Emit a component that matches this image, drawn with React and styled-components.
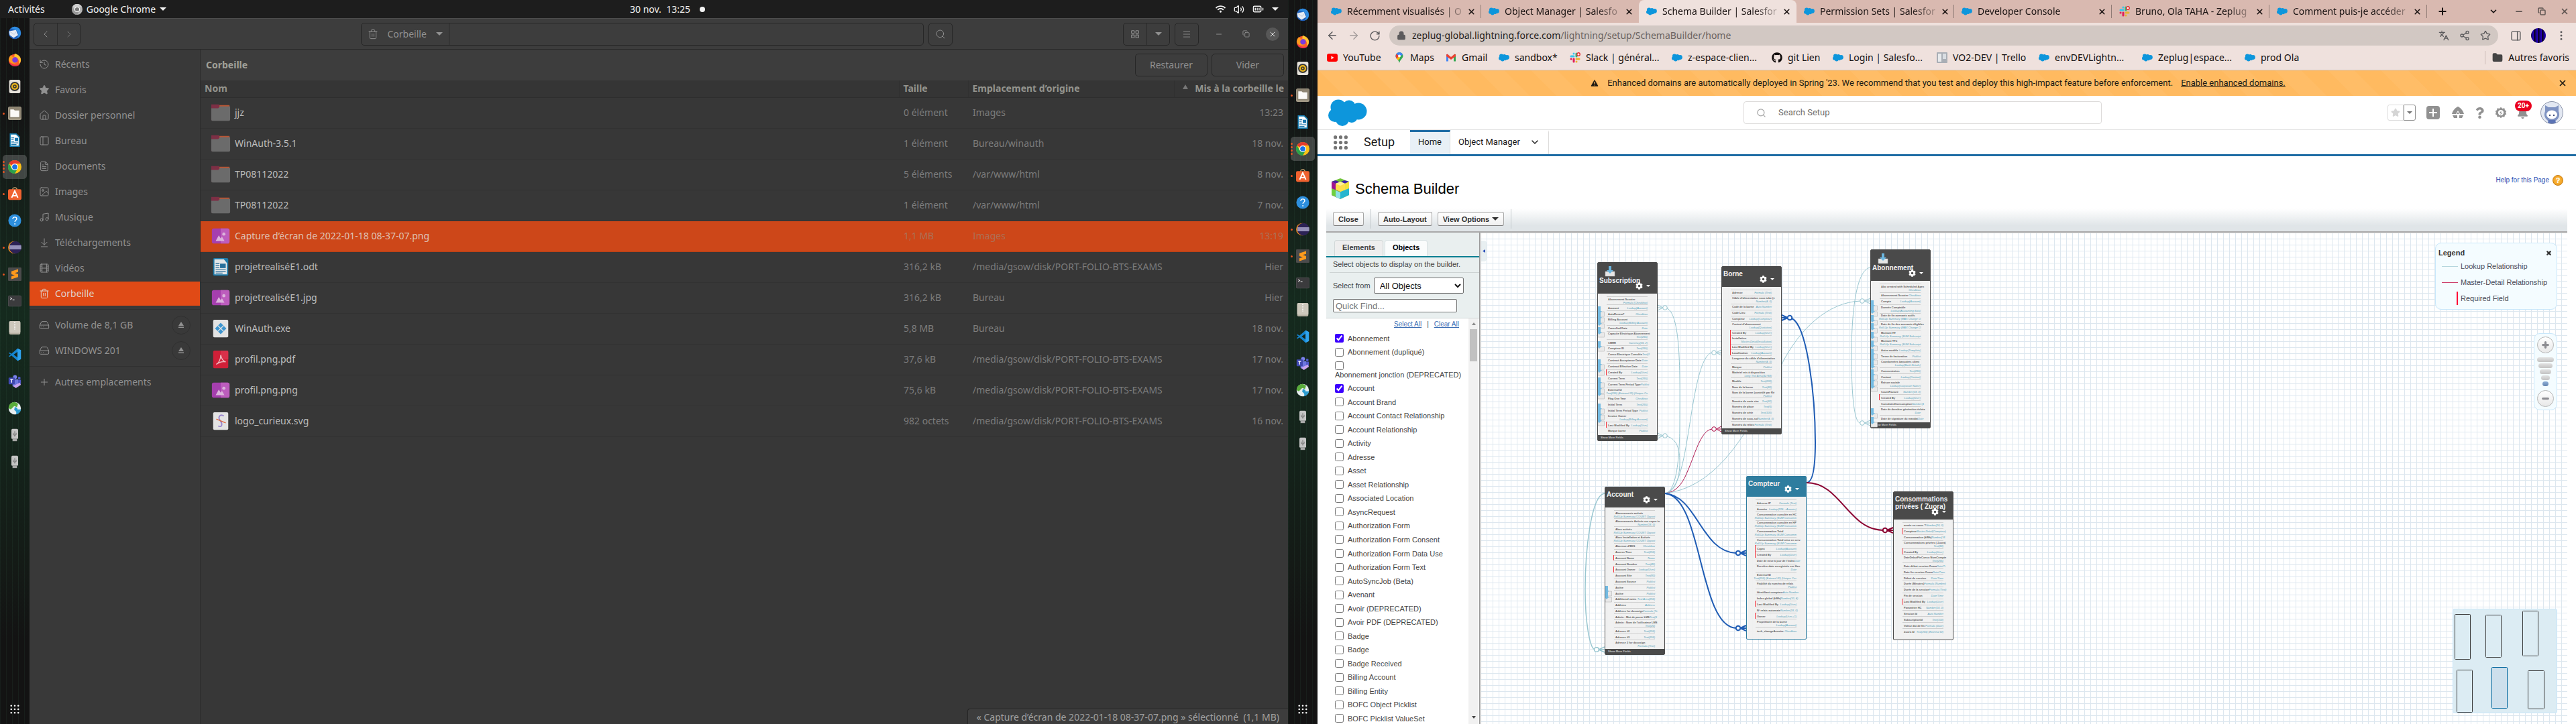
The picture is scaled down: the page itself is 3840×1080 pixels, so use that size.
import React, { useState } from "react";
import styled, { createGlobalStyle, css } from "styled-components";
import {
  History, Star, House, PanelLeft, PanelRight, FileText, Image as ImageIcon, Music, ArrowDownToLine,
  Film, Trash2, HardDrive, Plus, Search, LayoutGrid, Menu, Minus, Copy, X,
  ChevronLeft, ChevronRight, ChevronDown, ArrowLeft, ArrowRight, RotateCw, Share2, Languages,
  EllipsisVertical, TriangleAlert, Lock, Folder, Volume2, BatteryFull,
} from "lucide-react";
import { FaGithub, FaQuestion, FaCog, FaBell, FaWifi } from "react-icons/fa";

const UI = '"Noto Sans", "Open Sans", sans-serif';
const ARIAL = '"Liberation Sans", Arial, sans-serif';
const ROBOTO = 'Roboto, "Liberation Sans", sans-serif';

const Global = createGlobalStyle`
  *, *::before, *::after { box-sizing: border-box; }
  body { margin: 0; background: #141414; }
  button, input, select { font: inherit; color: inherit; margin: 0; }
  button { background: none; border: 0; padding: 0; }
  svg { display: block; flex: none; }
`;

/* ---------- desktop shell ---------- */

const Desktop = styled.div`
  display: grid;
  grid-template-columns: 1fr 1fr;
  height: 100vh;
  overflow: hidden;
  font-family: ${UI};
`;
const Monitor = styled.section`
  display: flex;
  flex-direction: column;
  min-width: 0;
  min-height: 0;
`;
const Workspace = styled.div`
  display: flex;
  flex: 1;
  min-height: 0;
`;

const TopBar = styled.header`
  display: grid;
  grid-template-columns: 1fr auto 1fr;
  align-items: center;
  height: 27px;
  padding: 0 14px 0 12px;
  background: #1d1d1d;
  color: #f2f2f2;
  font-size: 14px;
  line-height: 20px;
`;
const TopGroup = styled.div`
  display: flex;
  align-items: center;
  gap: ${(p) => p.$gap}px;
  justify-content: ${(p) => (p.$end ? "flex-end" : "flex-start")};
`;
const AppMenu = styled.button`
  display: flex;
  align-items: center;
  gap: 6px;
`;
const Clock = styled.div`
  display: flex;
  align-items: center;
  gap: 14px;
  padding-left: 72px;
`;
const Dot = styled.span`
  width: 8px;
  height: 8px;
  border-radius: 50%;
  background: #f2f2f2;
`;
const Caret = styled.span`
  width: 0;
  height: 0;
  border: ${(p) => p.$size}px solid transparent;
  border-top-color: currentColor;
  border-bottom-width: 0;
`;

const DockBar = styled.nav`
  display: flex;
  flex-direction: column;
  align-items: center;
  width: 44px;
  flex: none;
  padding: 2px 0;
  background:
    repeating-linear-gradient(90deg, rgba(60, 110, 85, 0.12) 0 1px, transparent 1px 9px),
    linear-gradient(#141414, #141515 14%, #15201a 26%, #152a1e 42%, #14241b 60%, #141a16 78%, #131313 88%);
`;
const DockSlot = styled.div`
  position: relative;
  display: grid;
  place-items: center;
  width: 44px;
  height: 40px;
`;
const DockButton = styled.button`
  display: grid;
  place-items: center;
  width: 36px;
  height: 36px;
  border-radius: 5px;
  background: ${(p) => (p.$active ? "rgba(150,150,150,.35)" : "transparent")};
`;
const RunDots = styled.span`
  position: absolute;
  left: 4px;
  top: 0;
  bottom: 0;
  display: flex;
  flex-direction: column;
  justify-content: center;
  gap: 2px;
`;
const RunDot = styled.i`
  width: 3px;
  height: 3px;
  border-radius: 50%;
  background: #e95420;
`;
const Spacer = styled.div`
  flex: 1;
`;

const Ico = ({ size = 20, children, vb = "0 0 24 24" }) => (
  <svg width={size} height={size} viewBox={vb} aria-hidden="true">{children}</svg>
);

const ChromeIcon = ({ size = 20, mono }) => (
  <Ico size={size}>
    <circle cx="12" cy="12" r="12" fill={mono ? "#b5b5b5" : "#fbc116"} />
    <path d="M12 12 1.6 6A12 12 0 0 1 22.4 6H12Z" fill={mono ? "#cfcfcf" : "#e33b2e"} />
    <path d="M1.6 6A12 12 0 0 0 12 24l5.2-9L12 12 6.8 15Z" fill={mono ? "#999" : "#2aa14b"} />
    <circle cx="12" cy="12" r="6" fill="#fff" />
    <circle cx="12" cy="12" r="4.6" fill={mono ? "#777" : "#1a73e8"} />
  </Ico>
);

const dockApps = [
  { name: "Thunderbird", dots: 0, art: <><circle cx="12" cy="12" r="11" fill="#1f5fb8" /><path d="M12 1a11 11 0 0 1 11 11c0 5-3 9-7 10 4-5 3-13-4-15L5 4a11 11 0 0 1 7-3Z" fill="#2f8be0" /><path d="M2 9 14 7l4 9-8 5-7-5Z" fill="#e8edf5" /><path d="m2 9 9 6 5-7" stroke="#b5c2d6" fill="none" /></> },
  { name: "Firefox", dots: 0, art: <><circle cx="12" cy="13" r="11" fill="#ff5a2b" /><path d="M12 1c6 2 11 6 11 12a11 11 0 0 1-4 8c2-7-1-13-8-14Z" fill="#ffc42e" /><path d="M1 12c1-4 2-6 4-8l3 3c5-1 9 1 9 6 0 4-3 6-6 6-6 0-9-3-10-7Z" fill="#ff9a1f" /><circle cx="12.5" cy="12.5" r="5" fill="#7a3be0" /><path d="M2 16a11 11 0 0 0 19 4c-6 3-14 2-19-4Z" fill="#f0304f" /></> },
  { name: "Rhythmbox", dots: 0, art: <><rect x="2" width="20" height="24" rx="3" fill="#e6e2da" /><circle cx="12" cy="12" r="8.4" fill="#3c3a37" /><circle cx="12" cy="12" r="6" fill="#f0b918" /><circle cx="12" cy="12" r="3.4" fill="#3c3a37" /><circle cx="12" cy="12" r="1.4" fill="#f0b918" /></> },
  { name: "Fichiers", dots: 1, art: <><rect width="24" height="24" rx="3" fill="#a59c89" /><rect x="1" y="1" width="22" height="20" rx="2" fill="#8d8472" /><path d="M4 5h6l2 2h8v12H4Z" fill="#fbfaf8" /></> },
  { name: "Writer", dots: 0, art: <><path d="M3 0h12l6 6v18H3Z" fill="#1880b5" /><path d="M5 2h9l5 5v15H5Z" fill="#fff" /><path d="M6 8h5M6 11h4M6 14h5M6 17h12M6 20h9" stroke="#1a76ad" strokeWidth="1.4" /><rect x="12" y="8" width="6" height="6" fill="#1a76ad" /></> },
  { name: "Google Chrome", dots: 4, active: true },
  { name: "Logiciels", dots: 1, art: <><path d="M8 5a4 4 0 0 1 8 0" stroke="#c9a36e" strokeWidth="1.6" fill="none" /><rect x="0" y="4" width="24" height="19" rx="2.5" fill="#f0622f" /><path d="m6.500 19 5.500-12 5.500 12M8 15.500h8" stroke="#fff" strokeWidth="2.4" fill="none" /></> },
  { name: "Aide", dots: 0, art: <><circle cx="12" cy="12" r="11.500" fill="#2d8fdd" /><path d="M8.500 9.500c0-5 7-4.500 7-.5 0 2.500-3.300 2.500-3.300 5.500" stroke="#fff" strokeWidth="1.7" fill="none" /><circle cx="12.200" cy="18" r="1.200" fill="#fff" /></> },
  { name: "Eclipse", dots: 1, art: <><circle cx="11" cy="12" r="11" fill="#e88a1d" /><circle cx="13" cy="12" r="11" fill="#2c2255" /><path d="M2.500 8.500h21v7h-21Z" fill="#a49fc4" /><path d="M2.500 10.800h21M2.500 13.200h21" stroke="#837db0" /></> },
  { name: "Sublime Text", dots: 1, art: <><rect width="24" height="24" rx="1.500" fill="#4b4b4b" /><path d="M18 3v5l-6 2 6 2v5L6 21v-5l6-2-6-2V7Z" fill="#ff9a1c" /></> },
  { name: "Terminal", dots: 0, art: <><rect y="2" width="24" height="20" rx="2.500" fill="#4c4c4e" /><rect x="1" y="3" width="22" height="18" rx="2" fill="#3b3b3d" /><path d="m4 6 2.500 1.800L4 9.600M8 10h3.500" stroke="#ddd" strokeWidth="1.300" fill="none" /></> },
  { name: "Archives", dots: 0, art: <><rect x="2" width="20" height="24" rx="2.500" fill="#b9b3a5" /><rect x="2" width="20" height="21" rx="2.500" fill="#cdc8bc" /><path d="M12 2v13" stroke="#fff" strokeWidth="2" strokeDasharray="1.500 1.500" /></> },
  { name: "VS Code", dots: 0, art: <><path d="M17 1 23 4v16l-6 3L6 13.500 3 16l-2-1.300L5 12 1 9.300 3 8l3 2.500Z" fill="#1585cf" /><path d="m17 7-7 5 7 5Z" fill="#14241c" /><path d="M17 1 23 4v16l-6 3Z" fill="#2fa3ee" /></> },
  { name: "Teams", dots: 0, art: <><circle cx="12.500" cy="4" r="3.500" fill="#7b83eb" /><circle cx="20" cy="6" r="2.400" fill="#5059c9" /><path d="M8 8h10v8a6 6 0 0 1-10 4Z" fill="#6d76e0" /><path d="M18 9h5v6a4 4 0 0 1-5 3Z" fill="#5059c9" /><rect x="1" y="5" width="11" height="12" rx="1" fill="#4048b0" /><path d="M4 8.500h5M6.500 8.500V14" stroke="#fff" strokeWidth="1.500" /><path d="m9 20 12-6 2 4-9 6Z" fill="#c9a4ef" /></> },
  { name: "AnyConnect", dots: 0, art: <><circle cx="12" cy="12" r="11" fill="#e8eef0" /><path d="M1 12C1 6 5 1 12 1l6 3-2 6-5-2-6 6Z" fill="#5aac3c" /><path d="M12 10c3 0 5 2 5 4h6c0 4-4 8-9 9 2-4 0-6-3-8Z" fill="#2b9bd0" /></> },
  { name: "Clé USB 1", dots: 0, art: <><rect x="6" y="1" width="12" height="18" rx="2" fill="#c4c4c4" /><rect x="8" y="19" width="8" height="4" fill="#a8a8a8" /><path d="M12 5v10M9.500 8v3l2.500 2 2.500-2V8" stroke="#7d7d7d" fill="none" strokeWidth="1.300" /></> },
  { name: "Clé USB 2", dots: 0, art: <><rect x="6" y="1" width="12" height="18" rx="2" fill="#c4c4c4" /><rect x="8" y="19" width="8" height="4" fill="#a8a8a8" /><path d="M12 5v10M9.500 8v3l2.500 2 2.500-2V8" stroke="#7d7d7d" fill="none" strokeWidth="1.300" /></> },
];

const NineDots = ({ size, color, r }) => (
  <Ico size={size}>
    {[3, 12, 21].map((y) => [3, 12, 21].map((x) => <circle key={x + "-" + y} cx={x} cy={y} r={r} fill={color} />))}
  </Ico>
);

function Dock() {
  return (
    <DockBar aria-label="Dock">
      {dockApps.map((a) => (
        <DockSlot key={a.name}>
          <RunDots>{Array.from({ length: a.dots }, (_, i) => <RunDot key={i} />)}</RunDots>
          <DockButton $active={a.active} aria-label={a.name}>
            {a.active ? <ChromeIcon /> : <Ico>{a.art}</Ico>}
          </DockButton>
        </DockSlot>
      ))}
      <Spacer />
      <DockSlot>
        <DockButton aria-label="Afficher les applications"><NineDots size={14} color="#fff" r={2.2} /></DockButton>
      </DockSlot>
    </DockBar>
  );
}

/* ---------- file manager ---------- */

const FilesWindow = styled.main`
  position: relative;
  display: flex;
  flex-direction: column;
  flex: 1;
  min-width: 0;
  background: #373737;
  color: #919191;
  font-size: 14px;
  line-height: 20px;
`;
const FilesHeader = styled.div`
  display: grid;
  grid-template-columns: 1fr 882px 1fr;
  align-items: center;
  height: 47px;
  padding: 0 13px 0 6px;
  background: #3d3d3d;
  border-top: 1px solid #4d4d4d;
  border-bottom: 1px solid #282828;
`;
const HeaderGroup = styled.div`
  display: flex;
  align-items: center;
  gap: 7px;
  justify-content: ${(p) => (p.$end ? "flex-end" : "flex-start")};
`;
const Segmented = styled.div`
  display: flex;
  height: 34px;
  border: 1px solid #262626;
  border-radius: 5px;
  ${(p) => p.$grow && css`flex: 1;`}
  & > * + * { border-left: 1px solid #2b2b2b; }
`;
const SegButton = styled.button`
  display: flex;
  align-items: center;
  justify-content: center;
  gap: 14px;
  min-width: 34px;
  padding: 0 ${(p) => p.$pad || 0}px;
`;
const PathEntry = styled.div`
  flex: 1;
`;
const WindowControls = styled.div`
  display: flex;
  align-items: center;
  gap: 20px;
  margin-left: 13px;
  button {
    display: grid;
    place-items: center;
    width: 20px;
    height: 20px;
    border-radius: 50%;
  }
  button:last-child { background: #575757; color: #e6e6e6; }
`;
const FilesBody = styled.div`
  display: flex;
  flex: 1;
  min-height: 0;
`;
const Places = styled.aside`
  width: 255px;
  flex: none;
  padding-top: 4px;
  background: #393939;
  border-right: 1px solid #2c2c2c;
`;
const PlaceGroup = styled.div`
  display: flex;
  flex-direction: column;
  gap: 2px;
  padding-bottom: 5px;
  & + & { border-top: 1px solid #303030; padding-top: 5px; }
`;
const Place = styled.a`
  display: flex;
  align-items: center;
  gap: 8px;
  height: 36px;
  padding: 0 14px;
  color: ${(p) => (p.$active ? "#e0d2cb" : "#919191")};
  background: ${(p) => (p.$active ? "#e04a16" : "transparent")};
  text-decoration: none;
`;
const Eject = styled.button`
  display: grid;
  place-items: center;
  width: 28px;
  height: 28px;
  margin-left: auto;
  border: 1px solid #303030;
  border-radius: 50%;
`;
const Listing = styled.div`
  flex: 1;
  min-width: 0;
`;
const TrashBar = styled.div`
  display: flex;
  align-items: center;
  gap: 6px;
  height: 46px;
  padding: 0 6px 0 8px;
  background: #3d3d3d;
  strong { flex: 1; color: #a0a098; }
`;
const TrashButton = styled.button`
  width: 108px;
  height: 34px;
  border: 1px solid #272727;
  border-radius: 5px;
`;
const FileTable = styled.table`
  width: 100%;
  table-layout: fixed;
  border-collapse: collapse;
  text-align: left;
  th {
    height: 25px;
    padding: 0 6px;
    background: #353535;
    border-bottom: 1px solid #2e2e2e;
    font-weight: bold;
    white-space: nowrap;
    color: #93938d;
  }
  th + th { border-left: 1px solid #303030; }
  td {
    height: 46px;
    padding: 0 7px;
    border-bottom: 1px solid #323232;
    white-space: nowrap;
    color: #7c7c7c;
  }
  th:last-child, td:last-child { text-align: right; }
`;
const SortMark = styled.span`
  display: inline-block;
  margin: 0 10px 4px 0;
  border: 4px solid transparent;
  border-top-width: 0;
  border-bottom: 7px solid #777;
`;
const FileRow = styled.tr`
  ${(p) => p.$selected && css`
    background: #cd4719;
    && td { color: #ad7057; border-color: #b84016; }
  `}
`;
const FileName = styled.div`
  display: flex;
  align-items: center;
  gap: 6px;
  padding-left: 8px;
  color: ${(p) => (p.$selected ? "#dfc3b6" : "#bdbdbd")};
`;
const StatusPill = styled.div`
  position: absolute;
  right: 0;
  bottom: 0;
  height: 23px;
  padding: 0 13px;
  border: 1px solid #262626;
  border-width: 1px 0 0 1px;
  border-radius: 4px 0 0 0;
  background: #3d3d3d;
  color: #a0a0a0;
  font-size: 14px;
  line-height: 23px;
  white-space: nowrap;
`;

const fileArt = {
  dir: <><path d="M1 3h12l3 3h14v22H1Z" fill="#7d2f45" /><path d="M14 4h16v5H14Z" fill="#b75635" /><path d="M1 9h11l3-3h16v21a2 2 0 0 1-2 2H3a2 2 0 0 1-2-2Z" fill="#6b6b6b" /></>,
  img: <><rect x="2" y="4" width="28" height="24" rx="3" fill="#a53fae" /><path d="M16 4h11a3 3 0 0 1 3 3v18a3 3 0 0 1-3 3H16Z" fill="#bd5dbd" /><path d="m8 24 5-9 3 5 2-3 4 7Z" fill="#dcb4dc" /><circle cx="21" cy="13" r="2.500" fill="#dcb4dc" /></>,
  odt: <><rect x="4" y="2" width="24" height="28" rx="2" fill="#1c7aaa" /><path d="M6 4h15l5 6v18H6Z" fill="#e2e6e8" /><path d="M8 11h6M8 14h6M8 17h6M8 20h16M8 23h16M8 26h11" stroke="#2a6d99" strokeWidth="1.300" /><rect x="15" y="11" width="9" height="7" fill="#256f9c" /></>,
  exe: <><rect x="4" y="2" width="24" height="28" rx="2" fill="#e3e3e3" /><path d="m16 7 9 9-9 9-9-9Z" fill="#3d95cf" /><path d="m11.500 11.500 9 9M20.500 11.500l-9 9" stroke="#e3e3e3" strokeWidth="1.300" /></>,
  pdf: <><rect x="4" y="2" width="24" height="28" rx="2" fill="#cf2038" /><path d="M16 2h10a2 2 0 0 1 2 2v12H16Z" fill="#d8304a" /><path d="M9 24c4-2 7-8 7-15 1 6 4 10 8 11-6-1-11 1-15 4Z" fill="none" stroke="#eeb4bb" strokeWidth="1.500" /></>,
  svg: <><rect x="4" y="2" width="24" height="28" rx="2" fill="#e3e3e3" /><path d="M21 8c-6-4-10 2-6 7s4 12-3 9" fill="none" stroke="#9a86cf" strokeWidth="2" /><path d="M9 13 24 19" stroke="#e0673f" strokeWidth="1.500" /></>,
};

const files = [
  ["dir", "jjz", "0 élément", "Images", "13:23"],
  ["dir", "WinAuth-3.5.1", "1 élément", "Bureau/winauth", "18 nov."],
  ["dir", "TP08112022", "5 éléments", "/var/www/html", "8 nov."],
  ["dir", "TP08112022", "1 élément", "/var/www/html", "7 nov."],
  ["img", "Capture d’écran de 2022-01-18 08-37-07.png", "1,1 MB", "Images", "13:19"],
  ["odt", "projetrealiséE1.odt", "316,2 kB", "/media/gsow/disk/PORT-FOLIO-BTS-EXAMS", "Hier"],
  ["img", "projetrealiséE1.jpg", "316,2 kB", "Bureau", "Hier"],
  ["exe", "WinAuth.exe", "5,8 MB", "Bureau", "18 nov."],
  ["pdf", "profil.png.pdf", "37,6 kB", "/media/gsow/disk/PORT-FOLIO-BTS-EXAMS", "17 nov."],
  ["img", "profil.png.png", "75,6 kB", "/media/gsow/disk/PORT-FOLIO-BTS-EXAMS", "17 nov."],
  ["svg", "logo_curieux.svg", "982 octets", "/media/gsow/disk/PORT-FOLIO-BTS-EXAMS", "16 nov."],
];

const places = [
  [History, "Récents"], [Star, "Favoris"], [House, "Dossier personnel"], [PanelLeft, "Bureau"],
  [FileText, "Documents"], [ImageIcon, "Images"], [Music, "Musique"], [ArrowDownToLine, "Téléchargements"],
  [Film, "Vidéos"], [Trash2, "Corbeille"],
];

function Files() {
  return (
    <FilesWindow>
      <FilesHeader>
        <HeaderGroup>
          <Segmented>
            <SegButton aria-label="Précédent"><ChevronLeft size={16} strokeWidth={1.5} /></SegButton>
            <SegButton aria-label="Suivant"><ChevronRight size={16} strokeWidth={1} /></SegButton>
          </Segmented>
        </HeaderGroup>
        <HeaderGroup>
          <Segmented $grow>
            <SegButton $pad={9}><Trash2 size={16} strokeWidth={1.5} />Corbeille <Caret $size={5} /></SegButton>
            <PathEntry />
          </Segmented>
          <Segmented><SegButton aria-label="Rechercher"><Search size={16} strokeWidth={1.5} /></SegButton></Segmented>
        </HeaderGroup>
        <HeaderGroup $end>
          <Segmented>
            <SegButton aria-label="Grille"><LayoutGrid size={14} strokeWidth={2} /></SegButton>
            <SegButton aria-label="Options d’affichage"><Caret $size={5} /></SegButton>
          </Segmented>
          <Segmented><SegButton aria-label="Menu"><Menu size={14} strokeWidth={1.5} /></SegButton></Segmented>
          <WindowControls>
            <button aria-label="Réduire"><Minus size={12} /></button>
            <button aria-label="Restaurer la fenêtre"><Copy size={11} /></button>
            <button aria-label="Fermer"><X size={12} /></button>
          </WindowControls>
        </HeaderGroup>
      </FilesHeader>
      <FilesBody>
        <Places>
          <PlaceGroup>
            {places.map(([Icon, label]) => (
              <Place key={label} href="#" $active={label === "Corbeille"}>
                <Icon size={16} strokeWidth={1.5} fill={label === "Favoris" ? "currentColor" : "none"} />{label}
              </Place>
            ))}
          </PlaceGroup>
          <PlaceGroup>
            {["Volume de 8,1 GB", "WINDOWS 201"].map((v) => (
              <Place as="div" key={v}>
                <HardDrive size={16} strokeWidth={1.5} />{v}
                <Eject aria-label={"Éjecter " + v}>
                  <Ico size={10} vb="0 0 10 10"><path d="m5 0 4 6H1ZM1 7.500h8V9H1Z" fill="currentColor" /></Ico>
                </Eject>
              </Place>
            ))}
          </PlaceGroup>
          <PlaceGroup>
            <Place href="#"><Plus size={16} strokeWidth={1.5} />Autres emplacements</Place>
          </PlaceGroup>
        </Places>
        <Listing>
          <TrashBar>
            <strong>Corbeille</strong>
            <TrashButton>Restaurer</TrashButton>
            <TrashButton>Vider</TrashButton>
          </TrashBar>
          <FileTable>
            <colgroup><col /><col width="103" /><col width="307" /><col width="170" /></colgroup>
            <thead>
              <tr><th>Nom</th><th>Taille</th><th>Emplacement d’origine</th><th><SortMark />Mis à la corbeille le</th></tr>
            </thead>
            <tbody>
              {files.map(([kind, name, size, from, when], i) => (
                <FileRow key={i} $selected={i === 4}>
                  <td><FileName $selected={i === 4}><Ico size={30} vb="0 0 32 32">{fileArt[kind]}</Ico>{name}</FileName></td>
                  <td>{size}</td><td>{from}</td><td>{when}</td>
                </FileRow>
              ))}
            </tbody>
          </FileTable>
        </Listing>
      </FilesBody>
      <StatusPill>« Capture d’écran de 2022-01-18 08-37-07.png » sélectionné&nbsp; (1,1 MB)</StatusPill>
    </FilesWindow>
  );
}

/* ---------- browser chrome ---------- */

const Browser = styled.main`
  display: flex;
  flex-direction: column;
  flex: 1;
  min-width: 0;
  background: #fff;
`;
const TabStrip = styled.div`
  display: flex;
  align-items: center;
  height: 34px;
  flex: none;
  padding: 0 8px 0 9px;
  background: #d9b9b0;
  font-size: 14px;
`;
const Tab = styled.div`
  display: flex;
  align-items: center;
  gap: 8px;
  flex: 0 1 235px;
  min-width: 0;
  height: 34px;
  padding: 0 8px 0 11px;
  color: #1b1413;
  background: ${(p) => (p.$active ? "#efe1dd" : "transparent")};
  border-radius: 8px 8px 0 0;
`;
const TabTitle = styled.span`
  flex: 1;
  white-space: nowrap;
  line-height: 20px;
  mask-image: linear-gradient(90deg, #000 80%, rgba(0, 0, 0, 0.25));
`;
const TabRule = styled.i`
  width: 1px;
  height: 20px;
  margin-left: -1px;
  background: ${(p) => (p.$hide ? "transparent" : "#8f7b75")};
`;
const TabTools = styled.div`
  display: flex;
  align-items: center;
  flex: 1;
  padding-left: 14px;
  gap: 16px;
  color: #5f5552;
  button { display: grid; place-items: center; width: 18px; height: 20px; }
  button:first-child { color: #1b1413; margin-right: auto; }
  button:nth-child(2) { color: #1b1413; margin-right: 4px; }
`;
const Toolbar = styled.div`
  display: flex;
  align-items: center;
  height: 38px;
  flex: none;
  gap: 14px;
  padding: 0 13px;
  background: #efe1dd;
  color: #5b5a5c;
`;
const UrlPill = styled.form`
  display: flex;
  align-items: center;
  flex: 1;
  gap: 9px;
  height: 30px;
  margin: 0 4px 0 -1px;
  padding: 0 11px;
  border-radius: 15px;
  background: #d2c8c3;
`;
const UrlText = styled.span`
  flex: 1;
  font-size: 14px;
  line-height: 20px;
  color: #6a6462;
  b { font-weight: 400; color: #221c1b; }
`;
const UrlActions = styled.span`
  display: flex;
  gap: 15px;
`;
const Avatar = styled.i`
  width: 22px;
  height: 22px;
  border-radius: 50%;
  background: repeating-linear-gradient(90deg, #12005e 0 2px, #2400b8 2px 4px, #0c0030 4px 6px);
`;
const Bookmarks = styled.nav`
  display: flex;
  align-items: center;
  height: 33px;
  flex: none;
  padding: 0 10px 4px 14px;
  background: #efe1dd;
  border-bottom: 1px solid #cfc5c2;
  font-size: 14px;
  line-height: 20px;
`;
const Bookmark = styled.a`
  display: flex;
  align-items: center;
  gap: 8px;
  flex: none;
  width: ${(p) => (p.$w ? p.$w + "px" : "auto")};
  color: #120d0c;
  text-decoration: none;
  white-space: nowrap;
`;
const OtherBookmarks = styled(Bookmark)`
  margin-left: auto;
  padding-left: 10px;
  border-left: 1px solid #c9bab5;
`;

const CloudArt = () => (
  <g>
    <circle cx="15" cy="12" r="11.500" /><circle cx="31" cy="11" r="9.500" /><circle cx="45" cy="18" r="12.500" />
    <circle cx="10" cy="24" r="10" /><circle cx="21" cy="30" r="10" /><circle cx="35" cy="26" r="9" />
    <rect x="10" y="12" width="32" height="18" />
  </g>
);
const Cloud = ({ w = 16, h = 12 }) => (
  <svg width={w} height={h} viewBox="0 0 58 40" fill="#0d96dc" aria-hidden="true"><CloudArt /></svg>
);
const SlackIcon = () => (
  <Ico size={16} vb="0 0 16 16">
    <g strokeWidth="3" strokeLinecap="round">
      <path d="M2 6h4M6 2v.1" stroke="#36c5f0" /><path d="M10 2v4" stroke="#2eb67d" />
      <path d="M10 10h4M10 14v-.1" stroke="#ecb22e" /><path d="M6 10v4M2 10h.1" stroke="#e01e5a" />
    </g>
    <circle cx="13" cy="3" r="2.200" fill="#fff" stroke="#e8272c" strokeWidth="1.400" />
  </Ico>
);
const YouTubeIcon = () => (
  <Ico size={16} vb="0 0 16 16"><rect y="2" width="16" height="12" rx="3" fill="#f00" /><path d="m6.500 5.500 4 2.500-4 2.500Z" fill="#fff" /></Ico>
);
const MapsIcon = () => (
  <Ico size={16} vb="0 0 16 16">
    <path d="M8 0a5.500 5.500 0 0 1 5.500 5.500C13.500 9 9 11 8 16 7 11 2.500 9 2.500 5.500A5.500 5.500 0 0 1 8 0Z" fill="#34a853" />
    <path d="M8 0a5.500 5.500 0 0 1 5 3.500L4 9C3 8 2.500 7 2.500 5.500A5.500 5.500 0 0 1 8 0Z" fill="#4285f4" />
    <path d="M3.500 2.500 8 5.500 4 10C3 8.500 2.500 7 2.500 5.500Z" fill="#ea4335" /><path d="m4 9 4-3 1 3-3 3Z" fill="#fbbc04" /><circle cx="8" cy="5.500" r="2" fill="#fff" />
  </Ico>
);
const GmailIcon = () => (
  <Ico size={16} vb="0 0 16 16">
    <path d="M1 13.500V3h3v10.500Z" fill="#4285f4" /><path d="M12 13.500V3h3v10.500Z" fill="#34a853" />
    <path d="M1 3.500 2.500 2.500 8 7l5.500-4.500L15 3.500V6L8 11 1 6Z" fill="#ea4335" />
  </Ico>
);
const TrelloIcon = () => (
  <Ico size={16} vb="0 0 16 16"><rect width="16" height="16" rx="1" fill="#a9aeb5" /><rect x="2" y="2" width="5" height="12" fill="#e8eaec" /><rect x="9" y="2" width="5" height="8" fill="#d9dde2" /></Ico>
);

const tabs = [
  ["sf", "Récemment visualisés | O"], ["sf", "Object Manager | Salesfo"], ["sf", "Schema Builder | Salesfor"],
  ["sf", "Permission Sets | Salesfor"], ["sf", "Developer Console"], ["slack", "Bruno, Ola TAHA - Zeplug"],
  ["sf", "Comment puis-je accéder"],
];
const bookmarks = [
  [YouTubeIcon, "YouTube", 100], [MapsIcon, "Maps", 77], [GmailIcon, "Gmail", 79], [Cloud, "sandbox*", 106],
  [SlackIcon, "Slack | général...", 152], [Cloud, "z-espace-clien...", 149], [FaGithub, "git Lien", 91],
  [Cloud, "Login | Salesfo...", 155], [TrelloIcon, "VO2-DEV | Trello", 152], [Cloud, "envDEVLightn...", 154],
  [Cloud, "Zeplug|espace...", 153], [Cloud, "prod Ola", 80],
];

/* ---------- Salesforce setup ---------- */

const Banner = styled.div`
  display: flex;
  align-items: center;
  height: 38px;
  flex: none;
  padding-right: 13px;
  background: repeating-linear-gradient(45deg, #ffba60 0 28px, #ffbd67 28px 56px);
  font: 13px/18px ${ROBOTO};
  color: #201b14;
  a { color: inherit; }
`;
const BannerText = styled.div`
  display: flex;
  align-items: center;
  justify-content: center;
  flex: 1;
  gap: 12px;
`;
const SetupHeader = styled.header`
  display: grid;
  grid-template-columns: 9fr 534px 10fr;
  align-items: center;
  height: 51px;
  flex: none;
  padding: 0 19px 0 16px;
  border-bottom: 1px solid #e1e1e1;
`;
const SearchBox = styled.label`
  display: flex;
  align-items: center;
  gap: 16px;
  height: 34px;
  padding: 0 18px;
  border: 1px solid #dddbda;
  border-radius: 4px;
  color: #a5a5a5;
  input {
    flex: 1;
    border: 0;
    outline: 0;
    font: 13px/18px ${ROBOTO};
    &::placeholder { color: #706e6b; opacity: 1; }
  }
`;
const SetupTools = styled.div`
  display: flex;
  align-items: center;
  justify-content: flex-end;
  gap: 14px;
  color: #919191;
`;
const FavGroup = styled.div`
  display: flex;
  height: 24px;
  margin-right: 2px;
  button { display: grid; place-items: center; width: 24px; border: 1px solid #dcdcdc; border-radius: 3px 0 0 3px; color: #d5d5d5; }
  button + button { width: 18px; border-color: #919191; border-radius: 0 3px 3px 0; color: #777; }
`;
const ToolButton = styled.button`
  position: relative;
  display: grid;
  place-items: center;
  width: 18px;
  height: 24px;
  margin-right: ${(p) => p.$after || 0}px;
`;
const Badge = styled.span`
  position: absolute;
  left: -2px;
  top: -6px;
  padding: 0 4px;
  border-radius: 8px;
  background: #ea001e;
  color: #fff;
  font: bold 10px/16px ${ROBOTO};
`;
const SetupNav = styled.nav`
  display: flex;
  height: 39px;
  flex: none;
  padding-left: 24px;
  border-bottom: 3px solid #1f6da5;
  font: 13px/20px ${ROBOTO};
  color: #181818;
`;
const NavTitle = styled.span`
  display: flex;
  align-items: center;
  gap: 24px;
  width: 114px;
  font-size: 18px;
`;
const NavTab = styled.a`
  display: flex;
  align-items: center;
  gap: 14px;
  padding: 0 12px 3px;
  color: inherit;
  text-decoration: none;
  background: ${(p) => (p.$active ? "#e8f0f6" : "transparent")};
  border-top: 3px solid ${(p) => (p.$active ? "#1f6da5" : "transparent")};
  border-right: 1px solid #dddbda;
`;
const PageTitle = styled.div`
  display: flex;
  align-items: center;
  gap: 8px;
  height: 78px;
  flex: none;
  padding: 18px 19px 0 20px;
  font-family: ${ARIAL};
  h1 { flex: 1; margin: 0; padding-top: 2px; font-size: 22px; line-height: 28px; font-weight: 400; color: #000; }
`;
const HelpLink = styled.a`
  display: flex;
  align-items: center;
  gap: 5px;
  padding-bottom: 24px;
  font-size: 10px;
  line-height: 16px;
  color: #2a4bb0;
  text-decoration: none;
`;
const HelpBall = styled.i`
  width: 16px;
  height: 16px;
  border-radius: 50%;
  border: 1px solid #c77c10;
  background: radial-gradient(#ffc24d, #ea920f);
  color: #fff;
  font: bold 11px/14px ${ARIAL};
  text-align: center;
`;
const BuilderBar = styled.div`
  display: flex;
  align-items: center;
  height: 36px;
  flex: none;
  margin: 0 13px;
  padding: 0 0 3px 10px;
  background: linear-gradient(#fff, #e0e5e8 75%);
  border-bottom: 2px solid #a9a9a9;
  font: bold 11px/16px ${ARIAL};
  color: #333;
`;
const BuilderButton = styled.button`
  display: flex;
  align-items: center;
  gap: 4px;
  height: 21px;
  padding: 0 7px;
  border: 1px solid #a5a5a5;
  border-bottom-color: #7f7f7f;
  border-radius: 3px;
  background: linear-gradient(#fff, #f0f0f0);
  & + & { margin-left: 8px; }
`;
const BarRule = styled.i`
  width: 1px;
  height: 29px;
  margin: 0 10px;
  background: #c3c9cc;
`;
const Builder = styled.div`
  display: flex;
  flex: 1;
  min-height: 0;
  margin: 0 13px;
`;
const Panel = styled.aside`
  display: flex;
  flex-direction: column;
  width: 231px;
  flex: none;
  overflow: hidden;
  background: #fff;
  border-right: 3px double #9b9b9b;
  font: 11px/14px ${ARIAL};
  color: #444;
`;
const PanelHead = styled.div`
  background: #e9efef;
`;
const PanelTabs = styled.div`
  display: flex;
  gap: 2px;
  padding: 11px 12px 0;
  border-bottom: 2px solid #0b7f92;
`;
const PanelTab = styled.button`
  height: 24px;
  padding: 0 11px 4px;
  border-radius: 4px 4px 0 0;
  border: 1px solid ${(p) => (p.$active ? "#d9e2e4" : "#d2d8d8")};
  border-bottom: 0;
  background: ${(p) => (p.$active ? "#fafcfc" : "#eeeeee")};
  color: ${(p) => (p.$active ? "#000" : "#444")};
  font-weight: bold;
`;
const PanelHint = styled.p`
  margin: 0 0 0 5px;
  padding: 3px 0 5px 5px;
  border-bottom: 1px solid #cdd3d3;
`;
const PanelForm = styled.div`
  padding: 7px 20px 8px 10px;
  border-bottom: 1px solid #cdd3d3;
`;
const SelectRow = styled.label`
  display: flex;
  align-items: center;
  gap: 5px;
  margin-bottom: 8px;
  select {
    width: 134px;
    height: 24px;
    padding: 0 4px;
    border: 1px solid #6f6f6f;
    border-radius: 2px;
    background: #fff;
    color: #111;
    font-size: 13px;
  }
`;
const QuickFind = styled.input`
  display: block;
  width: 185px;
  height: 20px;
  padding: 0 3px;
  border: 1px solid #6f6f6f;
  border-radius: 2px;
  background: #fff;
  &&& { font-size: 13px; }
  &::placeholder { color: #757575; opacity: 1; }
`;
const PanelScroll = styled.div`
  display: flex;
  flex: 1;
  min-height: 0;
`;
const ObjectList = styled.div`
  display: flex;
  flex-direction: column;
  justify-content: space-between;
  flex: 1;
  min-width: 0;
  margin-bottom: -2px;
`;
const SelectLinks = styled.div`
  display: flex;
  justify-content: flex-end;
  gap: 8px;
  padding: 2px 14px 3px 0;
  font-size: 10px;
  a { color: #3c6eb4; }
`;
const ObjectItem = styled.label`
  display: flex;
  flex-wrap: wrap;
  align-items: center;
  column-gap: 6px;
  padding: 3px 0 3px 13px;
  white-space: nowrap;
  input { width: 13px; height: 13px; accent-color: #3b00ff; }
`;
const QuickCheck = styled.input.attrs({ type: "checkbox" })`
  flex: none;
`;
const ScrollTrack = styled.div`
  display: flex;
  flex-direction: column;
  align-items: center;
  justify-content: space-between;
  width: 15px;
  margin-right: 1px;
  padding: 4px 0 6px;
  background: #f1f1f1;
`;
const ScrollThumb = styled.i`
  width: 11px;
  height: 48px;
  margin: 4px 0 auto;
  background: #c1c1c1;
`;

/* ---------- schema canvas ---------- */

const Canvas = styled.div`
  position: relative;
  flex: 1;
  min-width: 0;
  overflow: hidden;
  border-top: 1px solid #e4e4e4;
  background:
    linear-gradient(90deg, transparent 8px, #dde7ef 8px) 0 0 / 9px 9px,
    linear-gradient(transparent 8px, #dde7ef 8px) 0 0 / 9px 9px;
  font-family: ${ARIAL};
`;
const Links = styled.svg`
  position: absolute;
  inset: 0;
  width: 100%;
  height: 100%;
`;
const Handle = styled.button`
  position: absolute;
  left: 0;
  top: 11px;
  display: grid;
  place-items: center;
  width: 8px;
  height: 31px;
  border-radius: 0 4px 4px 0;
  background: #e8eff1;
`;
const Node = styled.article`
  position: absolute;
  left: ${(p) => p.$x}px;
  top: ${(p) => p.$y}px;
  display: flex;
  flex-direction: column;
  width: 90px;
  height: ${(p) => p.$h}px;
  border: 1px solid ${(p) => p.$tone};
  border-radius: 2px;
  background: rgba(240, 240, 240, 0.94);
`;
const NodeHead = styled.header`
  position: relative;
  flex: none;
  padding: 5px 2px 14px;
  background: ${(p) => p.$tone};
  color: #f2f2f2;
  font: bold 10px/11px ${ARIAL};
  span { display: block; }
  & > svg { margin: 0 0 0 5px; }
`;
const NodeGear = styled.button`
  position: absolute;
  right: 10px;
  bottom: 6px;
  display: flex;
  align-items: center;
  gap: 5px;
  color: #fff;
`;
const FieldList = styled.ul`
  display: flex;
  flex-direction: column;
  flex: 1;
  margin: 0;
  padding: 4px 14px ${(p) => (p.$open ? 8 : 2)}px 13px;
  list-style: none;
`;
const Field = styled.li`
  position: relative;
  display: flex;
  flex-direction: ${(p) => (p.$wide ? "column" : "row")};
  align-items: ${(p) => (p.$wide ? "stretch" : "center")};
  justify-content: ${(p) => (p.$wide ? "center" : "space-between")};
  flex: ${(p) => (p.$wide ? 13 : 9)} 1 0;
  min-height: 0;
  padding-left: 2px;
  border-top: 1px solid #cfcfcf;
  box-shadow: ${(p) => (p.$req ? "-1px 0 0 #f5333f" : "none")};
  font-size: 4px;
  line-height: 5px;
  white-space: nowrap;
  b { color: #5c5c5c; }
  em { align-self: ${(p) => (p.$wide ? "flex-end" : "auto")}; color: #4f9db8; }
`;
const Package = styled.svg`
  position: absolute;
  left: -13px;
  top: 2px;
  z-index: 1;
`;
const MoreFields = styled.button`
  flex: none;
  height: 8px;
  padding: 0 4px;
  background: #4a4a4a;
  color: #c9c9c9;
  font: bold 4px/8px ${ARIAL};
  text-align: left;
`;
const Legend = styled.section`
  position: absolute;
  right: 15px;
  top: 14px;
  width: 182px;
  padding: 6px 4px 4px;
  border: 1px solid #c8e7fb;
  border-radius: 9px;
  background: #f4fcff;
  font-size: 11px;
  line-height: 16px;
  color: #4a4a56;
`;
const LegendTitle = styled.header`
  display: flex;
  justify-content: space-between;
  align-items: center;
  padding-right: 3px;
  font-weight: bold;
  color: #333;
`;
const LegendRow = styled.div`
  display: flex;
  align-items: center;
  gap: 4px;
  height: 24px;
  padding-left: 5px;
`;
const LineKey = styled.i`
  width: 24px;
  height: 1px;
  background: ${(p) => p.$color};
`;
const BarKey = styled.i`
  width: 2px;
  height: 20px;
  margin-left: 22px;
  background: #ff0036;
`;
const ZoomBox = styled.div`
  position: absolute;
  right: 15px;
  top: 149px;
  display: flex;
  flex-direction: column;
  align-items: center;
  gap: 6px;
  width: 35px;
  padding: 4px 0;
  border: 1px solid #c8e7fb;
  border-radius: 9px;
  background: #f4fcff;
`;
const ZoomButton = styled.button`
  display: grid;
  place-items: center;
  width: 25px;
  height: 25px;
  border: 1px solid #b5b5b5;
  border-radius: 50%;
  background: linear-gradient(#fff, #e8e8e8);
  color: #8d8d92;
`;
const ZoomLevels = styled.div`
  display: flex;
  flex-direction: column;
  align-items: center;
  gap: 2px;
`;
const ZoomLevel = styled.button`
  width: ${(p) => p.$w}px;
  height: 7px;
  border-radius: 4px;
  background: ${(p) => (p.$on ? "linear-gradient(#8fb0d8,#6384b0)" : "linear-gradient(#e2e2e2,#c3c3c3)")};
`;
const MiniMap = styled.svg`
  position: absolute;
  right: 15px;
  bottom: 16px;
  border: 1px solid #c6e6fb;
  border-radius: 3px;
  background: #dcecf3;
`;

const ORIGIN = { x: 2208, y: 348 };
const DARK = "#4a4a4a";
const BLUE = "#2f7d9f";

/* Field flags: w = two lines, r = required, p = comes from a package */
const nodes = [
  {
    title: "Subscription", x: 2381, y: 391, h: 267, tone: DARK, icon: true, more: true,
    fields: [
      ["Abonnement Scooter", "Formula (Checkbox)", "w"], ["Account", "Lookup(Account)", "p"], ["AutoRenew?", "Checkbox", "p"],
      ["Billing Account", "Lookup(Billing Account)", "wp"], ["Cancelled Date", "Date", "p"], ["Capacite Electrique Abonnement", "Text(255)", "w"],
      ["CMRR", "Currency(16, 2)", "p"], ["Compteur ID", "Text(255)", ""], ["Conso Electrique Cumulée", "Text(2", ""],
      ["Contract Acceptance Date", "Date", "p"], ["Contract Effective Date", "Date", "p"], ["Created By", "Lookup(User)", "r"],
      ["Current Term", "Text(255)", "p"], ["Current Term Period Type", "Picklist", "p"], ["External Id", "Text(255) (External ID) (Unique Ca", "wp"],
      ["Flag One Year", "Checkbox", ""], ["Initial Term", "Text(255)", "p"], ["Initial Term Period Type", "Picklist", "p"],
      ["Invoice Owner", "Lookup(Billing Account)", "wp"], ["Last Modified By", "Lookup(User)", "r"], ["Marque borne", "Picklist", ""],
    ],
  },
  {
    title: "Borne", x: 2566, y: 397, h: 251, tone: DARK, more: true,
    fields: [
      ["Adresse", "Formula (Text)", ""], ["Câble d'alimentation sous tube (e", "Number(4, 0)", "w"], ["Code de la borne", "Auto Number", ""],
      ["Code Lieu", "Formula (Text)", ""], ["Compteur", "Lookup(Compteur)", ""], ["Contrat d'abonnement", "Lookup(Quotation)", "w"],
      ["Created By", "Lookup(User)", "r"], ["Installation", "Master-Detail(Installation)", "wr"], ["Last Modified By", "Lookup(User)", "r"],
      ["Localisation", "Lookup(Account)", "r"], ["Longueur du câble d'alimentation", "Number(4, 0)", "w"], ["Marque", "Picklist", ""],
      ["Matériel mis à disposition", "Long Text Area(32768)", "w"], ["Modèle", "Text(200)", ""], ["Nom de la borne", "Text(80)", ""],
      ["Nom de la borne (contrôlé par Ré", "Picklist", "w"], ["Numéro de carte sim", "Text(32)", ""], ["Numéro de place", "Text(6)", ""],
      ["Numéro de série", "Text(100)", ""], ["Numéro de sous-sol", "Number(4, 0)", ""], ["Numéro du relais", "Formula (Text)", ""],
    ],
  },
  {
    title: "Abonnement", x: 2788, y: 372, h: 267, tone: DARK, icon: true, more: true,
    fields: [
      ["Abo created with Scheduled Apex", "Checkbox", "w"], ["Abonnement Scooter", "Checkbox", ""], ["Compte", "Lookup(Account)", "p"],
      ["Donnée Comptable", "Lookup(Accounting data)", "wp"], ["Date de fin avenants actifs", "Roll-Up Summary (MAX Change O", "wp"],
      ["Date de fin des avenants éligibles", "Roll-Up Summary (MAX Change O", "wp"], ["Montant HT", "Roll-Up Summary (SUM Subscript", "wp"],
      ["Montant TTC", "Roll-Up Summary (SUM Subscript", "wp"], ["Autre modèle", "Lookup(Template)", "p"], ["Terme de facturation", "Picklist", "p"],
      ["Coordonnées bancaires client", "Lookup(Bank Details)", "wp"], ["Commentaires", "Text(255)", "p"], ["Contact", "Lookup(Contact)", "p"],
      ["Raison sociale", "Lookup(Corporate Name)", "wp"], ["CountFacture", "Number(18, 0)", ""], ["Created By", "Lookup(User)", "r"],
      ["CumulatedConsumption", "Number(1", ""], ["Date de dernière génération échéa", "Date", "wp"], ["Date de signature du mandat", "Date", "p"],
    ],
  },
  {
    title: "Account", x: 2392, y: 726, h: 251, tone: DARK, more: true,
    fields: [
      ["Abonnements activés", "Roll-Up Summary (COUNT Opport", "w"], ["Abonnements Activés sur copro in", "Number(18, 0)", "w"],
      ["Abos activés", "Roll-Up Summary (COUNT Opport", "w"], ["Abos Installation et Activés", "Roll-Up Summary (COUNT Opport", "w"],
      ["Absence d'EDS", "Checkbox", ""], ["Access Time", "Text(255)", ""], ["Account Name", "Name", "r"], ["Account Number", "Text(40)", ""],
      ["Account Owner", "Lookup(User)", "r"], ["Account Site", "Text(80)", ""], ["Account Source", "Picklist", ""], ["Active", "Picklist", "p"],
      ["Active", "Picklist", "p"], ["Additional notes", "Text Area(255)", ""], ["Address", "Address", ""], ["Address for docusign", "Formula (Te", ""],
      ["Admin : Mot de passe LMS", "Text(6", ""], ["Admin : Nom de l'utilisateur LMS", "Text(20)", "w"], ["Adresse #2", "Text(255)", ""],
      ["Adresse #3", "Text(255)", ""], ["Adresse 2 for docusign", "Formula (Text)", "w"],
    ],
  },
  {
    title: "Compteur", x: 2603, y: 710, h: 244, tone: BLUE,
    fields: [
      ["Adresse IP", "Formula (Text)", ""], ["Armoire", "Lookup(PDL - Armoire)", ""], ["Consommation cumulée en HC", "Roll-Up Summary (SUM Consomm", "w"],
      ["Consommation cumulée en HP", "Roll-Up Summary (SUM Consomm", "w"], ["Consommation Total", "Roll-Up Summary (SUM Consomm", "w"],
      ["Consommation Total mise en serv", "Roll-Up Summary (SUM Consomm", "w"], ["Copro", "Lookup(Account)", "r"], ["Created By", "Lookup(User)", "r"],
      ["Date de mise à jour de l'index", "Date", ""], ["Dernière date enregistrée sur Hen", "Date", "w"], ["External ID", "Text(255) (External ID) (Unique Cas", "w"],
      ["Fiabilité du numéro de relais", "Picklist", "w"], ["Identifiant compteur", "Auto Number", ""], ["Index global (kWh)", "Number(10, 4)", ""],
      ["Last Modified By", "Lookup(User)", "r"], ["N° relais automate", "Number(18, 0)", ""], ["Owner", "Lookup(User,+1)", "r"],
      ["Propriétaire de la borne", "Lookup(Account)", "w"], ["tech_changeArmoire", "Checkbox", ""],
    ],
  },
  {
    title: "Consommations privées ( Zuora)", x: 2822, y: 733, h: 222, tone: DARK,
    fields: [
      ["année en cours ?", "Number(18, 0)", ""], ["Compteur", "Master-Detail(Compteur)", "r"], ["Consommation (kWh)", "Number(16", ""],
      ["Consommations privées ( Zuora)", "Text(80)", "w"], ["Created By", "Lookup(User)", "r"], ["DateDebutFinConso NumCompte", "Text(255)", "w"],
      ["Date début session Zuora", "Date/Ti", ""], ["Date fin session Zuora", "Date/Time", ""], ["Début de session", "Date/Time", ""],
      ["Durée (Minutes)", "Formula (Number)", ""], ["Durée de la session", "Formula (Text)", ""], ["Fin de session", "Date/Time", ""],
      ["Last Modified By", "Lookup(User)", "r"], ["Paramètre HC", "Number(18, 0)", ""], ["Session Id", "Auto Number", ""],
      ["SubscriptionId", "Text(100)", ""], ["Valeur dat de fin", "Formula (Date)", ""], ["Zuora Id", "Text(255) (External ID)", ""],
    ],
  },
];

const LOOKUP = "#98c6d0";
const ACTIVE = "#1f5cb4";
const links = [
  { c: LOOKUP, w: 1, end: [2482, 459, 2471], d: "M2485 460C2507 470 2504 570 2504 630C2504 690 2498 734 2482 736" },
  { c: LOOKUP, w: 1, end: [2482, 650, 2471], d: "M2485 651C2500 655 2504 670 2504 690C2504 715 2496 734 2482 736" },
  { c: LOOKUP, w: 1, end: [2555, 526, 2566], d: "M2552 526C2532 530 2523 610 2516 650C2508 700 2500 732 2482 736" },
  { c: "#b01850", w: 1, end: [2555, 640, 2566], d: "M2552 640C2535 642 2526 680 2516 702C2507 725 2497 734 2482 736" },
  { c: LOOKUP, w: 1, end: [2776, 449, 2788], d: "M2773 449C2725 451 2683 490 2656 543C2615 625 2570 725 2482 736" },
  { c: LOOKUP, w: 1, end: [2776, 631, 2788], d: "M2788 399C2768 402 2760 460 2760 530C2760 590 2764 630 2773 631" },
  { c: LOOKUP, w: 1.5, end: [2380, 969, 2392], d: "M2392 736C2372 738 2363 820 2363 880C2363 930 2370 966 2377 969" },
  { c: ACTIVE, w: 2, end: [2668, 474, 2656], d: "M2671 475C2694 486 2706 590 2706 660C2706 700 2702 720 2693 720" },
  { c: ACTIVE, w: 2, end: [2591, 825, 2603], d: "M2482 736C2530 740 2536 823 2588 825" },
  { c: ACTIVE, w: 2, end: [2591, 937, 2603], d: "M2482 736C2538 740 2532 935 2588 937" },
  { c: "#8a0030", w: 2, end: [2810, 791, 2822], d: "M2693 720C2744 720 2755 790 2807 791" },
];

function Link({ c, w, d, end: [cx, cy, nx] }) {
  const s = nx > cx ? 3 : -3;
  return (
    <g fill="none" stroke={c} strokeWidth={w}>
      <path d={d} />
      <path d={`M${cx + s} ${cy}H${nx}M${cx + s} ${cy}L${nx} ${cy - 4}M${cx + s} ${cy}L${nx} ${cy + 4}`} />
      <circle cx={cx} cy={cy} r="3.3" fill="#fff" />
    </g>
  );
}

const PackageArt = () => (
  <>
    <path d="M1 8h14v7H1Z" fill="#e6e6e6" stroke="#b5b5b5" strokeWidth=".5" />
    <path d="M6 0h4v6h3l-5 5-5-5h3Z" fill="#6bb6e0" />
  </>
);

function SchemaNode({ n }) {
  return (
    <Node $x={n.x - ORIGIN.x} $y={n.y - ORIGIN.y} $h={n.h} $tone={n.tone}>
      <NodeHead $tone={n.tone}>
        {n.icon && <svg width="22" height="16" viewBox="0 0 16 16"><PackageArt /></svg>}
        <span>{n.title}</span>
        <NodeGear aria-label={"Options " + n.title}><FaCog size={11} /><Caret $size={3} /></NodeGear>
      </NodeHead>
      <FieldList $open={!n.more}>
        {n.fields.map(([label, type, f], i) => (
          <Field key={i} $wide={f.includes("w")} $req={f.includes("r")}>
            {f.includes("p") && (
              <Package width="10" height="16" viewBox="0 0 10 16" aria-hidden="true">
                <path d="M0 8h9.500v7H0Z" fill="#e9e9e9" stroke="#b5b5b5" strokeWidth=".6" />
                <path d="M0 0h4v7h2L2 11 0 9Z" fill="#74bbe2" />
              </Package>
            )}
            <b>{label}</b><em>{type}</em>
          </Field>
        ))}
      </FieldList>
      {n.more && <MoreFields>Show More Fields</MoreFields>}
    </Node>
  );
}

const objects = [
  "Abonnement", "Abonnement (dupliqué)", "Abonnement jonction (DEPRECATED)", "Account", "Account Brand",
  "Account Contact Relationship", "Account Relationship", "Activity", "Adresse", "Asset", "Asset Relationship",
  "Associated Location", "AsyncRequest", "Authorization Form", "Authorization Form Consent", "Authorization Form Data Use",
  "Authorization Form Text", "AutoSyncJob (Beta)", "Avenant", "Avoir (DEPRECATED)", "Avoir PDF (DEPRECATED)", "Badge",
  "Badge", "Badge Received", "Billing Account", "Billing Entity", "BOFC Object Picklist", "BOFC Picklist ValueSet",
];

const CubeIcon = () => (
  <svg width="28" height="31" viewBox="0 0 28 31" aria-hidden="true">
    <path d="m14 0 13 5-13 6L1 5Z" fill="#6fc33a" /><path d="m1 5 6-2 7 3-6 3Z" fill="#4a1fa0" /><path d="m20 3 7 2-6 3-6-3Z" fill="#3b1fa8" />
    <path d="M1 5 14 11V31L1 25Z" fill="#a0148f" /><path d="M27 5 14 11V31l13-6Z" fill="#f0e23c" />
    <path d="M1 15 14 20V31L1 25Z" fill="#6fcf3f" /><path d="M14 20 27 15V25L14 31Z" fill="#27b5cf" /><path d="M7 18l7 3v10l-7-3Z" fill="#8fe0e6" />
    <path d="m7 8 7-3 7 3v9l-7 3-7-3Z" fill="#ffe04a" /><path d="m7 8 7 3 7-3-7-3Z" fill="#fff09a" />
  </svg>
);

const minis = [[2, 7, 24, 68], [48, 8, 24, 64], [103, 2, 24, 68], [5, 90, 24, 64], [57, 86, 24, 62, true], [111, 91, 25, 58]];

function SchemaBuilder() {
  const [checked, setChecked] = useState({ 0: true, 3: true });
  return (
    <>
      <PageTitle>
        <CubeIcon />
        <h1>Schema Builder</h1>
        <HelpLink href="#">Help for this Page <HelpBall>?</HelpBall></HelpLink>
      </PageTitle>
      <BuilderBar>
        <BuilderButton>Close</BuilderButton><BarRule />
        <BuilderButton>Auto-Layout</BuilderButton>
        <BuilderButton>View Options <Caret $size={5} /></BuilderButton><BarRule />
      </BuilderBar>
      <Builder>
        <Panel>
          <PanelHead>
            <PanelTabs><PanelTab>Elements</PanelTab><PanelTab $active>Objects</PanelTab></PanelTabs>
            <PanelHint>Select objects to display on the builder.</PanelHint>
            <PanelForm>
              <SelectRow>Select from <select><option>All Objects</option></select></SelectRow>
              <QuickFind placeholder="Quick Find..." aria-label="Quick Find" />
            </PanelForm>
          </PanelHead>
          <PanelScroll>
            <ObjectList>
              <SelectLinks><a href="#">Select All</a><span>|</span><a href="#">Clear All</a></SelectLinks>
              {objects.map((o, i) => (
                <ObjectItem key={i}>
                  <QuickCheck checked={!!checked[i]} onChange={() => setChecked({ ...checked, [i]: !checked[i] })} />
                  <span>{o}</span>
                </ObjectItem>
              ))}
            </ObjectList>
            <ScrollTrack>
              <Ico size={8} vb="0 0 8 8"><path d="m4 2 3 4H1Z" fill="#8a8a8a" /></Ico>
              <ScrollThumb />
              <Ico size={8} vb="0 0 8 8"><path d="m4 6 3-4H1Z" fill="#444" /></Ico>
            </ScrollTrack>
          </PanelScroll>
        </Panel>
        <Canvas>
          <Links aria-hidden="true">
            <g transform={`translate(${-ORIGIN.x} ${-ORIGIN.y})`}>
              {links.map((l, i) => <Link key={i} {...l} />)}
            </g>
          </Links>
          <Handle aria-label="Réduire le panneau"><Ico size={5} vb="0 0 5 5"><path d="M4 0v5L0 2.500Z" fill="#2c4fb8" /></Ico></Handle>
          {nodes.map((n) => <SchemaNode key={n.title} n={n} />)}
          <Legend>
            <LegendTitle>Legend <button aria-label="Fermer la légende"><X size={9} strokeWidth={6} /></button></LegendTitle>
            <LegendRow><LineKey $color="#b5d6de" />Lookup Relationship</LegendRow>
            <LegendRow><LineKey $color="#cc3d6b" />Master-Detail Relationship</LegendRow>
            <LegendRow><BarKey />Required Field</LegendRow>
          </Legend>
          <ZoomBox>
            <ZoomButton aria-label="Zoom avant"><Plus size={13} strokeWidth={6} /></ZoomButton>
            <ZoomLevels>
              {[25, 21, 17, 13, 9].map((w) => <ZoomLevel key={w} $w={w} $on={w === 9} aria-label={"Zoom " + w} />)}
            </ZoomLevels>
            <ZoomButton aria-label="Zoom arrière"><Minus size={13} strokeWidth={6} /></ZoomButton>
          </ZoomBox>
          <MiniMap width="156" height="156" viewBox="0 0 154 154">
            {minis.map(([x, y, w, h, on], i) => (
              <rect key={i} x={x + 0.5} y={y + 0.5} width={w - 1} height={h - 1} rx="1" fill={on ? "#cddfec" : "none"} stroke={on ? "#00649c" : "#3c3c3c"} />
            ))}
          </MiniMap>
        </Canvas>
      </Builder>
    </>
  );
}

function BrowserWindow() {
  return (
    <Browser>
      <TabStrip>
        {tabs.map(([kind, title], i) => (
          <React.Fragment key={i}>
            <Tab $active={i === 2}>
              {kind === "sf" ? <Cloud /> : <SlackIcon />}
              <TabTitle>{title}</TabTitle>
              <button aria-label={"Fermer " + title}><X size={13} strokeWidth={3} /></button>
            </Tab>
            <TabRule $hide={i === 1 || i === 2} />
          </React.Fragment>
        ))}
        <TabTools>
          <button aria-label="Nouvel onglet"><Plus size={16} strokeWidth={3} /></button>
          <button aria-label="Liste des onglets"><ChevronDown size={14} strokeWidth={3} /></button>
          <button aria-label="Réduire"><Minus size={14} strokeWidth={3} /></button>
          <button aria-label="Restaurer"><Copy size={12} strokeWidth={3} /></button>
          <button aria-label="Fermer"><X size={14} strokeWidth={3} /></button>
        </TabTools>
      </TabStrip>
      <Toolbar>
        <ArrowLeft size={18} /><ArrowRight size={18} opacity={0.5} /><RotateCw size={17} />
        <UrlPill>
          <Lock size={14} fill="currentColor" />
          <UrlText><b>zeplug-global.lightning.force.com</b>/lightning/setup/SchemaBuilder/home</UrlText>
          <UrlActions><Languages size={16} /><Share2 size={16} /><Star size={16} /></UrlActions>
        </UrlPill>
        <PanelRight size={17} /><Avatar /><EllipsisVertical size={18} />
      </Toolbar>
      <Bookmarks>
        {bookmarks.map(([Icon, label, w]) => <Bookmark key={label} href="#" $w={w}><Icon size={16} />{label}</Bookmark>)}
        <OtherBookmarks href="#"><Folder size={16} fill="#444" color="#444" />Autres favoris</OtherBookmarks>
      </Bookmarks>
      <Banner>
        <BannerText>
          <TriangleAlert size={14} fill="#201b14" color="#ffba60" strokeWidth={2} />
          <span>Enhanced domains are automatically deployed in Spring '23. We recommend that you test and deploy this high-impact feature before enforcement.</span>
          <a href="#">Enable enhanced domains.</a>
        </BannerText>
        <button aria-label="Fermer le bandeau"><X size={14} strokeWidth={3} /></button>
      </Banner>
      <SetupHeader>
        <Cloud w={58} h={40} />
        <SearchBox><Search size={15} /><input placeholder="Search Setup" /></SearchBox>
        <SetupTools>
          <FavGroup>
            <button aria-label="Favori"><Star size={14} fill="currentColor" /></button>
            <button aria-label="Liste des favoris"><Caret $size={4} /></button>
          </FavGroup>
          <ToolButton $after={6} aria-label="Ajouter"><Ico size={20} vb="0 0 20 20"><rect width="20" height="20" rx="4" fill="#919191" /><path d="M10 4v12M4 10h12" stroke="#fff" strokeWidth="2" /></Ico></ToolButton>
          <ToolButton aria-label="Trailhead"><Ico size={18} vb="0 0 18 18"><path d="M9 0c3 1 8 6 9 11H12L9 6l-3 5H0C1 6 6 1 9 0Z" fill="#919191" /><path d="M1 13h7v4H3ZM11 13h6l-2 4h-4ZM9 8l2 3H7Z" fill="#919191" /></Ico></ToolButton>
          <ToolButton aria-label="Aide"><FaQuestion size={17} /></ToolButton>
          <ToolButton aria-label="Configuration"><Ico size={18} vb="0 0 24 24"><path d="m12 1 3 3 4-1 1 4 3 2-1.500 3L23 15l-3 2-1 4-4-1-3 3-3-3-4 1-1-4-3-2 1.500-3L1 9l3-2 1-4 4 1Z" fill="#919191" /><circle cx="12" cy="12" r="5.500" fill="#fff" /><path d="m13 8-4 5h3l-1 4 4-5h-3Z" fill="#919191" /></Ico></ToolButton>
          <ToolButton $after={4} aria-label="Notifications"><FaBell size={17} /><Badge>20+</Badge></ToolButton>
          <Ico size={34} vb="0 0 34 34">
            <circle cx="17" cy="17" r="16.500" fill="#e3e8f2" stroke="#8a93a8" />
            <path d="M7 6l5 3h10l5-3v9a11 11 0 0 1-4 14H11A11 11 0 0 1 7 15Z" fill="#7f93c2" /><ellipse cx="17" cy="20" rx="8" ry="6.500" fill="#fff" />
            <circle cx="14" cy="21" r="1.200" fill="#3b4a7a" /><circle cx="20" cy="21" r="1.200" fill="#3b4a7a" /><path d="M12 28h10l1 4a16 16 0 0 1-12 0Z" fill="#5c74b5" />
          </Ico>
        </SetupTools>
      </SetupHeader>
      <SetupNav>
        <NavTitle><NineDots size={21} color="#747474" r={3} />Setup</NavTitle>
        <NavTab href="#" $active>Home</NavTab>
        <NavTab href="#">Object Manager <ChevronDown size={16} /></NavTab>
      </SetupNav>
      <SchemaBuilder />
    </Browser>
  );
}

export default function App() {
  return (
    <Desktop>
      <Global />
      <Monitor>
        <TopBar>
          <TopGroup $gap={40}>
            <span>Activités</span>
            <AppMenu><ChromeIcon size={16} mono />Google Chrome <Caret $size={5} /></AppMenu>
          </TopGroup>
          <Clock>30 nov.&nbsp; 13:25 <Dot /></Clock>
          <TopGroup $gap={12} $end><FaWifi size={15} /><Volume2 size={16} /><BatteryFull size={17} /><Caret $size={5} /></TopGroup>
        </TopBar>
        <Workspace><Dock /><Files /></Workspace>
      </Monitor>
      <Monitor>
        <Workspace><Dock /><BrowserWindow /></Workspace>
      </Monitor>
    </Desktop>
  );
}
